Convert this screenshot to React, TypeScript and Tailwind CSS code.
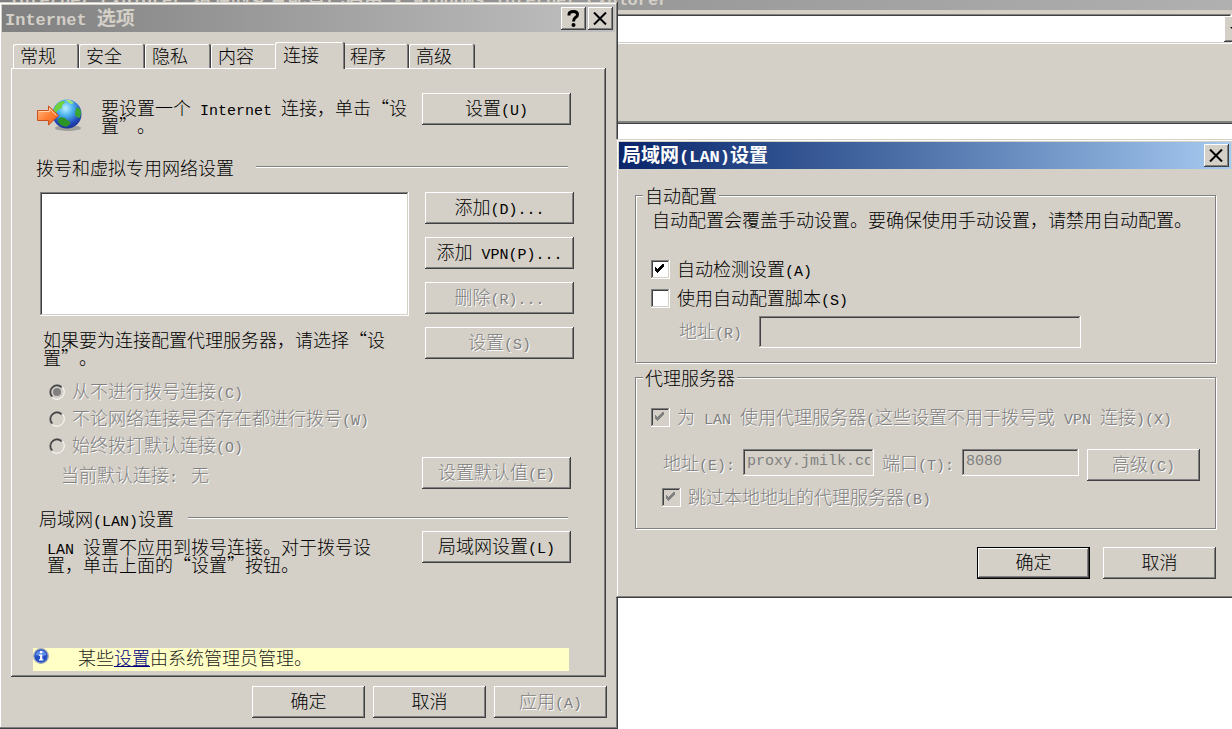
import { useState, type ReactNode } from 'react';
import clsx from 'clsx';

const raised = 'bg-[#d4d0c8] shadow-[inset_-1px_-1px_#404040,inset_1px_1px_#fff,inset_-2px_-2px_#808080]';
const sunken = 'shadow-[inset_-1px_-1px_#fff,inset_1px_1px_#808080,inset_-2px_-2px_#d4d0c8,inset_2px_2px_#404040]';
const frame =
  'bg-[#d4d0c8] p-[3px] shadow-[inset_-1px_-1px_#404040,inset_1px_1px_#d4d0c8,inset_-2px_-2px_#808080,inset_2px_2px_#fff]';
const disabledText = 'text-[#808080] [text-shadow:1px_1px_0_#fff]';

const tabs = ['常规', '安全', '隐私', '内容', '连接', '程序', '高级'];

const dialOptions = ['从不进行拨号连接(C)', '不论网络连接是否存在都进行拨号(W)', '始终拨打默认连接(O)'];

// Latin runs are half the width of a Chinese character
function Mixed({ children, bold }: { children: string; bold?: boolean }) {
  return (
    <span className="whitespace-pre">
      {children.split(/([ -~]+)/).map((part, i) =>
        i % 2 === 1 ? (
          <span
            key={i}
            className={clsx('font-["Liberation_Mono",monospace] leading-0', bold ? 'text-[17px]' : 'text-[15px]')}
          >
            {part}
          </span>
        ) : (
          part
        )
      )}
    </span>
  );
}

function Button({
  children,
  disabled,
  primary,
  wide
}: {
  children: string;
  disabled?: boolean;
  primary?: boolean;
  wide?: boolean;
}) {
  return (
    <button
      type="button"
      disabled={disabled}
      className={clsx(
        'h-8 shrink-0 pb-[4px] text-center',
        raised,
        wide ? 'w-[149px]' : 'w-[113px]',
        primary && 'border border-black',
        disabled && disabledText
      )}
    >
      <Mixed>{children}</Mixed>
    </button>
  );
}

function TitleButton({ label, children }: { label: string; children: ReactNode }) {
  return (
    <button type="button" aria-label={label} className={clsx('flex h-[23px] w-[25px] items-center justify-center', raised)}>
      {children}
    </button>
  );
}

function CloseIcon() {
  return (
    <svg width="15" height="13" viewBox="0 0 15 13" stroke="#000" strokeWidth="2" fill="none">
      <path d="M1 0.5 L13 12.5 M13 0.5 L1 12.5" />
    </svg>
  );
}

function HelpIcon() {
  return (
    <svg width="13" height="17" viewBox="0 0 13 17">
      <path d="M2 5.5 V4.5 Q2 1.5 6.5 1.5 Q10.5 1.5 10.5 4.5 Q10.5 6.3 8.5 7.5 Q6.5 8.8 6.5 11.5" fill="none" stroke="#000" strokeWidth="3" />
      <circle cx="6.5" cy="15" r="2" />
    </svg>
  );
}

function Divider() {
  return <div className="h-[2px] flex-1 border-t border-b border-t-[#808080] border-b-white" />;
}

function Radio({ label, defaultChecked }: { label: string; defaultChecked?: boolean }) {
  return (
    <label className={clsx('flex h-[27px] items-center gap-[7px]', disabledText)}>
      <span className="relative size-4">
        <input type="radio" name="dial" disabled defaultChecked={defaultChecked} className="peer block size-4 appearance-none" />
        <svg className="pointer-events-none absolute inset-0" width="16" height="16" viewBox="0 0 16 16" fill="none">
          <path d="M2.7 13.3 A7.5 7.5 0 0 1 13.3 2.7" stroke="#808080" />
          <path d="M3.4 12.6 A6.5 6.5 0 0 1 12.6 3.4" stroke="#404040" strokeWidth="1.4" />
          <path d="M13.3 2.7 A7.5 7.5 0 0 1 2.7 13.3" stroke="#fff" />
        </svg>
        <span className="pointer-events-none absolute inset-1 hidden rounded-full bg-[#808080] peer-checked:block" />
      </span>
      <span className="pb-1">
        <Mixed>{label}</Mixed>
      </span>
    </label>
  );
}

function Checkbox({ label, checked, disabled }: { label: string; checked?: boolean; disabled?: boolean }) {
  return (
    <label className={clsx('flex h-[19px] items-center gap-[7px]', disabled && disabledText)}>
      <span className="relative size-[19px]">
        <input
          type="checkbox"
          defaultChecked={checked}
          disabled={disabled}
          className={clsx('peer block size-[19px] appearance-none', sunken, disabled ? 'bg-[#d4d0c8]' : 'bg-white')}
        />
        <svg
          className="pointer-events-none absolute top-[4px] left-[4px] hidden peer-checked:block"
          width="9"
          height="10"
          viewBox="0 0 9 10"
          fill="currentColor"
        >
          <path d="M0 3 H1 V4 H2 V5 H3 V4 H4 V3 H5 V2 H6 V1 H7 V0 H9 V3 H8 V4 H7 V5 H6 V6 H5 V7 H4 V8 H3 V9 H2 V8 H1 V7 H0 Z" />
        </svg>
      </span>
      <span className="pb-1">
        <Mixed>{label}</Mixed>
      </span>
    </label>
  );
}

function GlobeIcon() {
  return (
    <svg width="46" height="34" viewBox="0 0 46 34" className="shrink-0">
      <defs>
        <radialGradient id="sea" cx="0.45" cy="0.3" r="0.75">
          <stop offset="0" stopColor="#bdeeff" />
          <stop offset="0.35" stopColor="#4bb2ee" />
          <stop offset="0.75" stopColor="#2348b8" />
          <stop offset="1" stopColor="#15298a" />
        </radialGradient>
        <linearGradient id="arrow" x1="0" y1="0" x2="1" y2="1">
          <stop offset="0" stopColor="#ffc08a" />
          <stop offset="0.5" stopColor="#ff8238" />
          <stop offset="1" stopColor="#e8591c" />
        </linearGradient>
      </defs>
      <ellipse cx="31" cy="30" rx="13" ry="3" fill="#8c8a86" opacity="0.7" />
      <circle cx="30" cy="16" r="14.5" fill="url(#sea)" />
      <path d="M17 11 Q20 3 27 3 L28 5 L25 7 L25 10 L21 12 L19 15 L16 16 Z" fill="#6ed03c" />
      <path d="M28 2 L33 2 L37 5 L34 6 L31 4 Z" fill="#a2e67a" />
      <path d="M39 10 Q43 9 44 14 Q44 19 42 20 Q38 19 38 15 Z" fill="#3aa532" />
      <path d="M22 20 Q27 18 30 22 Q34 23 33 26 Q30 30 26 28 Q21 26 21 22 Z" fill="#2c9427" />
      <path d="M0.5 12.5 H11.5 V8 L21.5 17.5 L11.5 27 V22.5 H0.5 Z" fill="url(#arrow)" stroke="#c9501c" />
      <path d="M1.5 13.5 H12.5 V10.5 L19.5 17.5" fill="none" stroke="#ffd3ac" />
    </svg>
  );
}

function InfoIcon() {
  return (
    <svg width="16" height="16" viewBox="0 0 16 16" className="shrink-0">
      <circle cx="8" cy="8" r="7.3" fill="#2450c4" stroke="#a5aab8" strokeWidth="1.3" />
      <path d="M2.5 7 A5.6 5.6 0 0 1 13.5 7 Q8 9 2.5 7 Z" fill="#5f8ce8" />
      <rect x="7" y="3" width="2.4" height="2.2" fill="#fff" />
      <path d="M6 6.5 H9.3 V11.3 H10.4 V12.5 H6 V11.3 H7.1 V7.7 H6 Z" fill="#fff" />
    </svg>
  );
}

function BrowserWindow() {
  return (
    <div>
      <div className="relative h-[10px] overflow-hidden bg-linear-to-r from-[#808080] to-[#b0b0b0]">
        <div className="absolute bottom-[3px] left-[9px] text-[19px] leading-[20px] font-bold text-[#d4d0c8]">
          <Mixed bold>Internet Explorer 增强的安全配置已启用 - Windows Internet Explorer</Mixed>
        </div>
      </div>
      <div className="bg-[#d4d0c8] pt-1">
        <div className={clsx('flex bg-white', sunken)}>
          <input aria-label="地址" className="h-[30px] min-w-0 flex-1 bg-transparent px-2 outline-none" />
          <button type="button" aria-label="展开" className={clsx('mt-[2px] -mr-4 h-[26px] w-6 shrink-0', raised)}>
            <svg width="8" height="5" viewBox="0 0 8 5" className="ml-[6px]">
              <path d="M0 0 H8 L4 4 Z" />
            </svg>
          </button>
        </div>
        <div className="h-[80px] border-b border-[#404040] shadow-[inset_0_-2px_#808080]" />
      </div>
    </div>
  );
}

function OptionsDialog() {
  const [active, setActive] = useState('连接');

  return (
    <section className={clsx('absolute top-[2px] -left-px w-[619px]', frame)}>
      <header className="flex h-[27px] items-center gap-[2px] bg-linear-to-r from-[#808080] to-[#c0c0c0] px-[2px] text-[19px] font-bold text-[#d4d0c8]">
        <h1 className="flex-1 pb-1 pl-px">
          <Mixed bold>Internet 选项</Mixed>
        </h1>
        <TitleButton label="帮助">
          <HelpIcon />
        </TitleButton>
        <TitleButton label="关闭">
          <CloseIcon />
        </TitleButton>
      </header>

      <div className="px-[9px] pt-[10px]">
        <div role="tablist" className="flex h-[26px] items-end pl-[2px]">
          {tabs.map(tab => (
            <button
              key={tab}
              type="button"
              role="tab"
              aria-selected={active === tab}
              onClick={() => setActive(tab)}
              className={clsx(
                'rounded-t-[2px] bg-[#d4d0c8] text-left',
                active === tab
                  ? 'relative z-10 -mx-[2px] -mb-px h-[27px] w-[70px] pb-[3px] pl-2 shadow-[inset_-1px_0_#404040,inset_1px_1px_#fff,inset_-2px_0_#808080]'
                  : 'h-6 w-[66px] pb-[2px] pl-[7px] shadow-[inset_-1px_0_#404040,inset_1px_1px_#fff,inset_-2px_0_#808080]'
              )}
            >
              {tab}
            </button>
          ))}
        </div>

        <div role="tabpanel" className={clsx('pt-[25px] pb-[6px]', raised)}>
          <div className="flex items-start pr-[35px] pl-[26px]">
            <div className="pt-[5px]">
              <GlobeIcon />
            </div>
            <p className="flex-1 pt-[5px] pl-[18px] whitespace-nowrap">
              <Mixed>要设置一个 Internet 连接，单击“设</Mixed>
              <br />
              置”。
            </p>
            <Button wide>设置(U)</Button>
          </div>

          <div className="mt-6 flex items-center gap-[22px] pr-[38px] pl-[25px]">
            <h2>拨号和虚拟专用网络设置</h2>
            <Divider />
          </div>

          <div className="mt-4 flex justify-between pr-8 pl-[29px]">
            <div className="w-[369px]">
              <div role="listbox" aria-label="拨号和虚拟专用网络设置" className={clsx('h-[124px] bg-white', sunken)} />
              <p className="mt-[14px] pb-px pl-[3px]">
                如果要为连接配置代理服务器，请选择“设
                <br />
                置”。
              </p>
            </div>
            <div className="flex flex-col gap-[13px]">
              <Button wide>添加(D)...</Button>
              <Button wide>添加 VPN(P)...</Button>
              <Button wide disabled>
                删除(R)...
              </Button>
              <Button wide disabled>
                设置(S)
              </Button>
            </div>
          </div>

          <div className="mt-[11px] flex items-end justify-between pr-[35px] pl-[38px]">
            <div>
              {dialOptions.map((option, i) => (
                <Radio key={option} label={option} defaultChecked={i === 0} />
              ))}
              <p className={clsx('flex h-[30px] items-center gap-[13px] pl-3', disabledText)}>
                <Mixed>当前默认连接:</Mixed>
                <span>无</span>
              </p>
            </div>
            <Button wide disabled>
              设置默认值(E)
            </Button>
          </div>

          <div className="mt-5 flex items-center gap-[14px] pr-[38px] pl-[28px]">
            <h2>
              <Mixed>局域网(LAN)设置</Mixed>
            </h2>
            <Divider />
          </div>

          <div className="mt-1 flex items-start justify-between pr-[35px] pl-9">
            <p className="pt-[6px] pb-px whitespace-nowrap">
              <Mixed>LAN 设置不应用到拨号连接。对于拨号设</Mixed>
              <br />
              置，单击上面的“设置”按钮。
            </p>
            <Button wide>局域网设置(L)</Button>
          </div>

          <div className="mt-[74px] mr-[37px] ml-[22px] flex h-[23px] items-start bg-[#ffffc6] text-[#222]">
            <InfoIcon />
            <p className="pl-[29px]">
              某些
              <a href="#" className="text-[#000080] underline">
                设置
              </a>
              由系统管理员管理。
            </p>
          </div>
        </div>
      </div>

      <footer className="flex justify-end gap-2 pt-[9px] pr-2 pb-2">
        <Button>确定</Button>
        <Button>取消</Button>
        <Button disabled>应用(A)</Button>
      </footer>
    </section>
  );
}

function LanDialog() {
  const group = 'min-w-0 border border-[#808080] shadow-[1px_1px_#fff,inset_1px_1px_#fff]';
  const field = 'bg-[#d4d0c8] px-1 pb-[2px] font-["Liberation_Mono",monospace] text-[15px] text-[#808080]';

  return (
    <section className={clsx('absolute top-[139px] -right-[2px] left-[616px]', frame)}>
      <header className="flex h-[27px] items-center bg-linear-to-r from-[#0a246a] to-[#a6caf0] px-[2px] text-[19px] font-bold text-white">
        <h1 className="flex-1 pb-1 pl-px">
          <Mixed bold>局域网(LAN)设置</Mixed>
        </h1>
        <TitleButton label="关闭">
          <CloseIcon />
        </TitleButton>
      </header>

      <div className="pt-[17px] pr-[15px] pb-4 pl-4">
        <fieldset className={clsx('pb-[14px]', group)}>
          <legend className="ml-[7px] bg-[#d4d0c8] px-[2px]">自动配置</legend>
          <p className="pt-[6px] pl-4 whitespace-nowrap">自动配置会覆盖手动设置。要确保使用手动设置，请禁用自动配置。</p>
          <div className="mt-8 flex flex-col gap-[10px] pl-[15px]">
            <Checkbox label="自动检测设置(A)" checked />
            <Checkbox label="使用自动配置脚本(S)" />
          </div>
          <div className="mt-2 flex items-center gap-[17px] pl-[43px]">
            <label htmlFor="script" className={clsx('pb-1', disabledText)}>
              <Mixed>地址(R)</Mixed>
            </label>
            <input id="script" disabled className={clsx('h-8 w-[322px]', field, sunken)} />
          </div>
        </fieldset>

        <fieldset className={clsx('mt-[5px] pb-[21px]', group)}>
          <legend className="ml-[7px] bg-[#d4d0c8] px-[2px]">代理服务器</legend>
          <div className="pt-[22px] pl-[15px]">
            <Checkbox label="为 LAN 使用代理服务器(这些设置不用于拨号或 VPN 连接)(X)" checked disabled />
          </div>
          <div className="mt-[22px] flex items-start gap-2 pl-[27px]">
            <label htmlFor="host" className={clsx('leading-[27px]', disabledText)}>
              <Mixed>地址(E):</Mixed>
            </label>
            <input id="host" disabled defaultValue="proxy.jmilk.cc" className={clsx('h-[27px] w-[131px]', field, sunken)} />
            <label htmlFor="port" className={clsx('leading-[27px]', disabledText)}>
              <Mixed>端口(T):</Mixed>
            </label>
            <input id="port" disabled defaultValue="8080" className={clsx('h-[27px] w-[117px]', field, sunken)} />
            <Button disabled>高级(C)</Button>
          </div>
          <div className="mt-[7px] pl-[26px]">
            <Checkbox label="跳过本地地址的代理服务器(B)" checked disabled />
          </div>
        </fieldset>

        <footer className="flex justify-end gap-[13px] pt-[18px]">
          <Button primary>确定</Button>
          <Button>取消</Button>
        </footer>
      </div>
    </section>
  );
}

export default function App() {
  return (
    <main
      lang="zh-CN"
      className='relative min-h-screen overflow-hidden bg-white font-["Noto_Sans_CJK_SC",sans-serif] text-[18px] leading-[18px] font-light text-black [text-spacing-trim:space-all]'
    >
      <BrowserWindow />
      <OptionsDialog />
      <LanDialog />
    </main>
  );
}
